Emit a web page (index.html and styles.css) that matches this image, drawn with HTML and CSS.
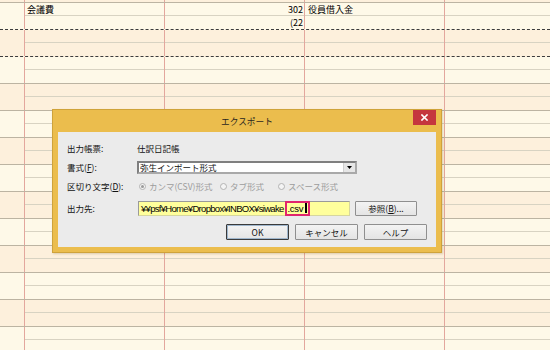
FILE: index.html
```html
<!DOCTYPE html>
<html lang="ja">
<head>
<meta charset="utf-8">
<title>エクスポート</title>
<link rel="stylesheet" href="styles.css">
</head>
<body>
<div class="sheet">
  <div class="entry peach"><div class="c0"></div><div class="cell"></div><div class="cell"></div><div class="cell"></div><div class="cell"></div></div>
  <div class="entry cream dash">
    <div class="c0"></div>
    <div class="cell"><div class="ln left">会議費</div><div class="ln"></div></div>
    <div class="cell"><div class="ln right">302</div><div class="ln right">(22</div></div>
    <div class="cell"><div class="ln left2">役員借入金</div><div class="ln"></div></div>
    <div class="cell"></div>
  </div>
  <div class="entry peach dash"><div class="c0"></div><div class="cell"></div><div class="cell"></div><div class="cell"></div><div class="cell"></div></div>
  <div class="entry cream"><div class="c0"></div><div class="cell"></div><div class="cell"></div><div class="cell"></div><div class="cell"></div></div>
  <div class="entry peach"><div class="c0"></div><div class="cell"></div><div class="cell"></div><div class="cell"></div><div class="cell"></div></div>
  <div class="entry cream"><div class="c0"></div><div class="cell"></div><div class="cell"></div><div class="cell"></div><div class="cell"></div></div>
  <div class="entry peach"><div class="c0"></div><div class="cell"></div><div class="cell"></div><div class="cell"></div><div class="cell"></div></div>
  <div class="entry cream"><div class="c0"></div><div class="cell"></div><div class="cell"></div><div class="cell"></div><div class="cell"></div></div>
  <div class="entry peach"><div class="c0"></div><div class="cell"></div><div class="cell"></div><div class="cell"></div><div class="cell"></div></div>
  <div class="entry cream"><div class="c0"></div><div class="cell"></div><div class="cell"></div><div class="cell"></div><div class="cell"></div></div>
  <div class="entry peach"><div class="c0"></div><div class="cell"></div><div class="cell"></div><div class="cell"></div><div class="cell"></div></div>
  <div class="entry cream"><div class="c0"></div><div class="cell"></div><div class="cell"></div><div class="cell"></div><div class="cell"></div></div>
  <div class="entry peach"><div class="c0"></div><div class="cell"></div><div class="cell"></div><div class="cell"></div><div class="cell"></div></div>
  <div class="entry cream"><div class="c0"></div><div class="cell"></div><div class="cell"></div><div class="cell"></div><div class="cell"></div></div>
</div>

<div class="dialog">
  <div class="titlebar">
    <span class="title">エクスポート</span>
    <button class="close" type="button" aria-label="閉じる">
      <svg width="7" height="7" viewBox="0 0 7 7"><path d="M1 1L6 6M6 1L1 6" stroke="#fff" stroke-width="1.6" stroke-linecap="square"/></svg>
    </button>
  </div>
  <div class="panel">
    <div class="form">
      <span class="lbl">出力帳票:</span>
      <span class="val">仕訳日記帳</span>

      <span class="lbl">書式(<u>F</u>):</span>
      <div class="select"><span class="sel-text">弥生インポート形式</span><span class="arrow"><svg width="5" height="3" viewBox="0 0 5 3"><path d="M0 0H5L2.5 3Z" fill="#000"/></svg></span></div>

      <span class="lbl">区切り文字(<u>D</u>):</span>
      <div class="radios">
        <span class="radio"><span class="dot on"></span>カンマ(CSV)形式</span>
        <span class="radio"><span class="dot"></span>タブ形式</span>
        <span class="radio"><span class="dot"></span>スペース形式</span>
      </div>

      <span class="lbl">出力先:</span>
      <div class="dest">
        <div class="input"><span class="path">¥¥psf¥Home¥Dropbox¥INBOX¥siwake</span><span class="hl">.csv<span class="caret"></span></span></div>
        <button class="btn browse" type="button">参照(<u>B</u>)...</button>
      </div>
    </div>
    <div class="actions">
      <button class="btn default" type="button">OK</button>
      <button class="btn" type="button">キャンセル</button>
      <button class="btn" type="button">ヘルプ</button>
    </div>
  </div>
</div>
</body>
</html>
```

FILE: styles.css
```css
html, body {
  margin: 0;
  padding: 0;
}
body {
  width: 550px;
  height: 350px;
  overflow: hidden;
  position: relative;
  background: #fef9e8;
  font-family: "Noto Sans CJK JP", "Liberation Sans", sans-serif;
  color: #111;
}

/* ---------- ledger sheet ---------- */
.sheet {
  margin-top: -24px;
}
.entry {
  display: grid;
  grid-template-columns: 25px 140px 140px 140px 1fr;
  height: 27px;
  box-sizing: border-box;
  border-bottom: 1px solid #bcb4a2;
}
.entry.cream { background: #fef9e8; }
.entry.peach { background: #fdf0dc; }
.entry.dash { border-bottom: 1px dashed #3c3c3c; }

.c0 {
  border-right: 1px solid #e3a79d;
}
.cell {
  border-right: 1px solid #e3a79d;
  background-image: linear-gradient(to bottom, transparent 12px, #d8d3c2 12px, #d8d3c2 13px, transparent 13px);
}
.cell:last-child {
  border-right: none;
}
.ln {
  height: 13px;
  line-height: 13px;
  font-size: 9px;
  color: #000;
  white-space: nowrap;
}
.ln.left { padding-left: 2px; }
.ln.left2 { padding-left: 3px; }
.ln.right { text-align: right; padding-right: 1px; }

/* ---------- dialog ---------- */
.dialog {
  position: absolute;
  left: 52px;
  top: 109px;
  width: 390px;
  height: 144px;
  box-sizing: border-box;
  border: 1px solid #cfa33a;
  background: #ebbd4d;
  padding: 0 5px 5px;
  display: flex;
  flex-direction: column;
  box-shadow: 1px 1px 2px rgba(120, 90, 20, 0.25);
}
.titlebar {
  height: 22px;
  display: grid;
  grid-template-columns: 1fr auto 1fr;
  align-items: start;
}
.title {
  grid-column: 2;
  font-size: 8.7px;
  line-height: 24px;
  color: #2a261e;
}
.close {
  grid-column: 3;
  justify-self: end;
  width: 23px;
  height: 15px;
  margin: 0;
  padding: 0;
  border: none;
  background: #c5363e;
  display: flex;
  align-items: center;
  justify-content: center;
}
.panel {
  flex: 1;
  background: #ebebeb;
  display: flex;
  flex-direction: column;
  font-size: 8.5px;
  color: #111;
}
.form {
  display: grid;
  grid-template-columns: 70px 1fr;
  grid-template-rows: 18px 20px 19px 24px;
  align-items: center;
  padding: 7px 0 0 9px;
}
.lbl, .val {
  white-space: nowrap;
  line-height: 11px;
}
.lbl u, .btn u {
  text-decoration: underline;
  text-underline-offset: 1px;
}

.select {
  width: 220px;
  height: 13px;
  box-sizing: border-box;
  border: 2px solid #7f7f7f;
  border-right-color: #a9a9a9;
  border-bottom-color: #a9a9a9;
  background: #fff;
  display: flex;
  align-items: center;
}
.sel-text {
  flex: 1;
  padding-left: 1px;
  line-height: 9px;
  white-space: nowrap;
}
.arrow {
  width: 11px;
  height: 9px;
  background: #e6e6e6;
  border-left: 1px solid #d0d0d0;
  display: flex;
  align-items: center;
  justify-content: center;
}

.radios {
  display: flex;
  align-items: center;
  padding-left: 2px;
  color: #9c9c9c;
}
.radio {
  display: flex;
  align-items: center;
  gap: 3px;
  white-space: nowrap;
  line-height: 11px;
}
.radio:nth-child(1) { width: 81px; }
.radio:nth-child(2) { width: 58px; }
.dot {
  width: 7px;
  height: 7px;
  box-sizing: border-box;
  border: 1px solid #b3b3b3;
  border-radius: 50%;
  background: #f4f4f4;
  display: flex;
  align-items: center;
  justify-content: center;
}
.dot.on::after {
  content: "";
  width: 3px;
  height: 3px;
  border-radius: 50%;
  background: #9a9a9a;
}

.dest {
  display: flex;
  align-items: center;
  gap: 5px;
  padding-left: 1px;
}
.input {
  width: 212px;
  height: 15px;
  box-sizing: border-box;
  border: 1px solid #9a9a9a;
  border-right-color: #d6d6a0;
  border-bottom-color: #d6d6a0;
  background: #ffff9c;
  display: flex;
  align-items: stretch;
  font-family: "Liberation Sans", Arial, sans-serif;
  font-size: 9.5px;
  color: #000;
  overflow: visible;
}
.path {
  padding-left: 2px;
  letter-spacing: -0.7px;
  line-height: 13px;
  white-space: nowrap;
}
.hl {
  margin: -1px 0 -1px 1px;
  border: 2px solid #e0246e;
  padding: 0 1px 0 1px;
  line-height: 11px;
  display: flex;
  align-items: center;
  letter-spacing: -0.3px;
}
.caret {
  width: 2px;
  height: 10px;
  background: #000;
  margin-left: 2px;
}

.btn {
  width: 62px;
  height: 16px;
  margin: 0;
  padding: 0;
  box-sizing: border-box;
  border: 1px solid #8f8f8f;
  border-radius: 1px;
  background: linear-gradient(#f3f3f3, #e4e4e4);
  font-family: "Noto Sans CJK JP", "Liberation Sans", sans-serif;
  font-size: 8.5px;
  line-height: 12px;
  color: #111;
  white-space: nowrap;
}
.btn.browse {
  height: 15px;
}
.btn.default {
  border: 1px solid #3a3a3a;
  box-shadow: inset 0 0 0 1px #9fb6cc;
}
.actions {
  display: flex;
  justify-content: flex-end;
  gap: 6px;
  margin-top: 4px;
  padding-right: 9px;
}
.actions .btn {
  width: 63px;
}
```
